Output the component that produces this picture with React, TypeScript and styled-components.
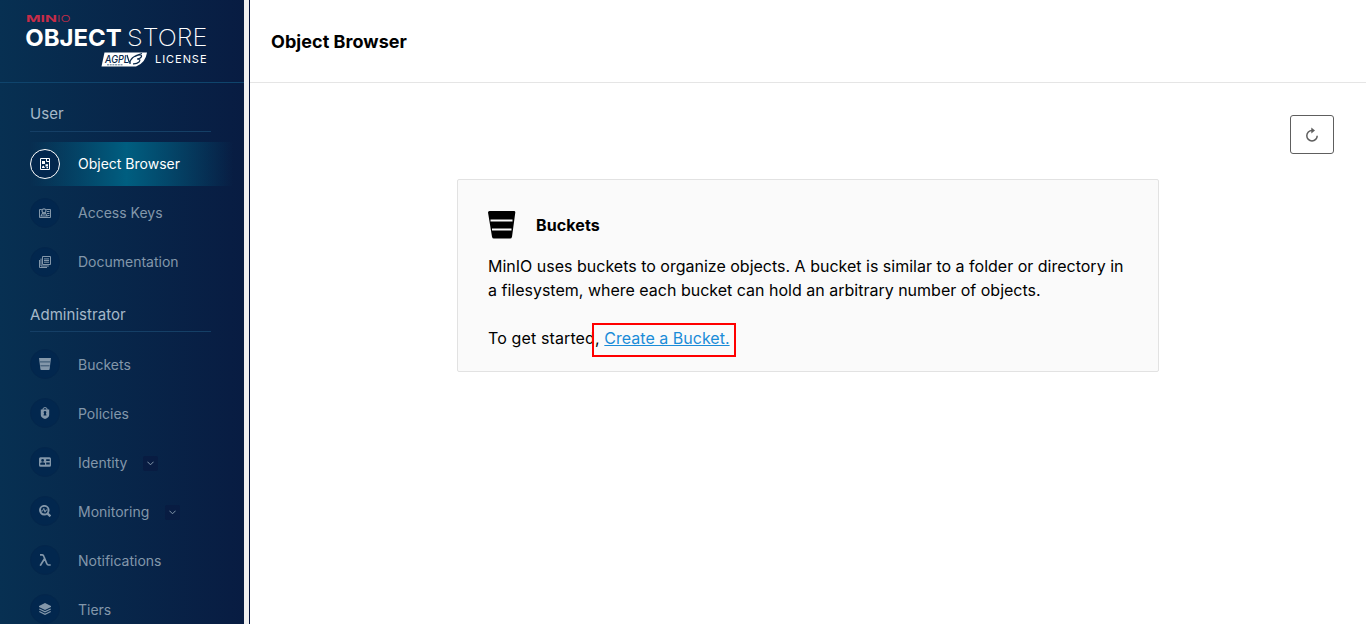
import React from "react";
import styled, { createGlobalStyle, css } from "styled-components";

const GlobalStyle = createGlobalStyle`
  *, *::before, *::after { box-sizing: border-box; }
  html, body { margin: 0; height: 100%; overflow: hidden; }
  body { font-family: Inter, "Liberation Sans", sans-serif; color: #000; background: #fff; }
`;

const Layout = styled.div`
  display: flex;
  height: 100vh;
`;

const Sidebar = styled.aside`
  flex: 0 0 244px;
  overflow: hidden;
  background: linear-gradient(90deg, #073052 0%, #081c42 100%);
`;

const Gutter = styled.div`
  flex: 0 0 6px;
  background: #f0f0f0;
  border-right: 1px solid #06133a;
`;

const LogoBar = styled.div`
  height: 83px;
  border-bottom: 1px solid #0f446c;
  svg { display: block; }
`;

const Section = styled.section<{ $first?: boolean }>`
  padding: ${(p) => (p.$first ? 21 : 15)}px 0 0 30px;
`;

const SectionTitle = styled.h2<{ $drop?: number }>`
  width: 181px;
  height: 28px;
  margin: 0 0 10px;
  padding-top: ${(p) => 1 + (p.$drop ?? 0)}px;
  border-bottom: 1px solid #153f66;
  color: #a5b8c8;
  font-size: 15px;
  font-weight: 400;
  line-height: 18px;
  letter-spacing: 0.05px;
`;

const NavItem = styled.div<{ $active?: boolean }>`
  display: flex;
  align-items: center;
  height: 44px;
  margin-bottom: 5px;
  color: ${(p) => (p.$active ? "#fff" : "#8397aa")};
  ${(p) =>
    p.$active &&
    css`
      background: linear-gradient(90deg, rgba(0, 94, 128, 0) 0%, #005e80 45%, rgba(0, 94, 128, 0) 95%);
    `}
`;

const IconDisc = styled.span<{ $active?: boolean }>`
  display: flex;
  align-items: center;
  justify-content: center;
  width: 30px;
  height: 30px;
  margin-right: 18px;
  border-radius: 50%;
  border: 1px solid ${(p) => (p.$active ? "#fff" : "#04264b")};
  background: #02274e;
  svg { display: block; }
`;

const NavText = styled.div<{ $drop?: number }>`
  display: flex;
  align-items: center;
  padding-top: ${(p) => 2 * (p.$drop ?? 0)}px;
`;

const NavLabel = styled.span`
  font-size: 14px;
  line-height: 20px;
`;

const Expander = styled.span`
  display: flex;
  align-items: center;
  justify-content: center;
  width: 15px;
  height: 15px;
  margin-left: 15.5px;
  border-radius: 2px;
  background: #081c42;
`;

const Main = styled.main`
  flex: 1;
  min-width: 0;
`;

const Header = styled.header`
  display: flex;
  align-items: center;
  height: 83px;
  padding: 2px 0 0 21px;
  border-bottom: 1px solid #e5e5e5;
`;

const Title = styled.h1`
  margin: 0;
  font-size: 18px;
  line-height: 24px;
  font-weight: 700;
  letter-spacing: 0.05px;
`;

const Toolbar = styled.div`
  display: flex;
  justify-content: flex-end;
  padding: 32px 32px 25px 0;
`;

const RefreshButton = styled.button`
  display: flex;
  align-items: center;
  justify-content: center;
  width: 44px;
  height: 39px;
  padding: 0;
  border: 1px solid #5e5e5e;
  border-radius: 3px;
  background: #fff;
`;

const Card = styled.section`
  width: 702px;
  height: 193px;
  margin-left: 207px;
  padding: 30px;
  border: 1px solid #e2e2e2;
  border-radius: 2px;
  background: #fafafa;
`;

const CardHeading = styled.div`
  display: flex;
  align-items: center;
  gap: 20px;
  height: 30px;
  margin-bottom: 14px;
`;

const CardTitle = styled.h2`
  margin: 0;
  font-size: 16px;
  font-weight: 700;
  letter-spacing: 0.1px;
`;

const Paragraph = styled.p<{ $spaced?: boolean }>`
  margin: 0 0 24px;
  font-size: 16px;
  line-height: 24px;
  letter-spacing: ${(p) => (p.$spaced ? "0.12px" : "normal")};
`;

const LinkWrap = styled.span`
  position: relative;
  letter-spacing: 0.02px;
`;

const Highlight = styled.span`
  position: absolute;
  left: -12px;
  top: -5px;
  width: 144px;
  height: 34px;
  border: 2px solid #f00;
`;

const Link = styled.a`
  color: #1a8cd8;
  text-decoration: underline;
`;

const Logo = () => (
  <svg width="244" height="82" viewBox="0 0 244 82">
    <g fontFamily="Inter, sans-serif">
      <text x="26" y="22" fontSize="9.6" fontWeight="700" fill="#c72c48" textLength="31" lengthAdjust="spacingAndGlyphs">MIN</text>
      <text x="57" y="22" fontSize="9.6" fontWeight="300" fill="#c72c48" textLength="13.5" lengthAdjust="spacingAndGlyphs">IO</text>
      <text x="25.3" y="46" fontSize="23.5" fontWeight="700" fill="#fff" textLength="96.5" lengthAdjust="spacingAndGlyphs">OBJECT</text>
      <text x="127" y="46" fontSize="23.5" fontWeight="200" fill="#fff" textLength="80.5" lengthAdjust="spacingAndGlyphs">STORE</text>
      <text x="155" y="63" fontSize="11" fill="#fff" textLength="51.5" lengthAdjust="spacing">LICENSE</text>
    </g>
    <path d="M104.5 52.5H147Q145.5 63 136 66.5H101.5Z" fill="#fff" />
    <text x="105" y="62.5" fontFamily="Inter, sans-serif" fontSize="10.5" fontWeight="500" fontStyle="italic" fill="#082749" textLength="24" lengthAdjust="spacingAndGlyphs">AGPL</text>
    <path d="M107 64.8H123" stroke="#53708a" strokeWidth="1" strokeDasharray="2 .7" />
    <path d="M127 55L129.3 62.5M130 64Q129 57 142 53.5M135 56.5Q142 53.5 141.5 56.5Q140.5 58.8 137 59Q141.5 59 139 62Q137 64 133 63.8" fill="none" stroke="#082749" strokeWidth="1.2" />
  </svg>
);

const iconShapes: Record<string, React.ReactNode> = {
  browser: (
    <>
      <path d="M1.5 .5H10.5V11.5H1.5Z" fill="none" stroke="currentColor" strokeWidth="1" />
      <path d="M7.5 .5V3.5H10.5" fill="none" stroke="currentColor" />
      <path d="M3 3H6V6H3ZM6.5 6.2H9V8.5H6.5ZM3 8.7L4.5 7.5L6 10H3ZM7.5 9H9V10.3H7.5Z" fill="currentColor" />
    </>
  ),
  keys: (
    <>
      <path d="M2.8 2.5H.5V10.5H11.5V2.5H7.2" fill="none" stroke="currentColor" />
      <circle cx="5" cy="3.8" r="2" fill="none" stroke="currentColor" strokeWidth="1.2" />
      <path d="M2 9L3.6 6L5 7.2L6.4 6L8 9ZM8 4.5H10.5M8 6.5H10.5M8.5 8.5H10.5" fill="none" stroke="currentColor" strokeWidth="1.1" />
    </>
  ),
  docs: (
    <path d="M3.5 .5H11.5V8.5H3.5ZM5 2.9H10M5 4.5H10M5 6.2H10M2 2.5V10H9.8M.5 4V11.5H8" fill="none" stroke="currentColor" strokeWidth="1" />
  ),
  bucket: (
    <>
      <path d="M0 0H12L10.6 11.3Q10.5 12 9.7 12H2.3Q1.5 12 1.4 11.3Z" fill="currentColor" />
      <path d="M1 3.9H11M1.4 7.8H10.6" stroke="#2b4968" strokeWidth=".9" />
    </>
  ),
  policy: (
    <>
      <path d="M4 3V2Q4 .6 6 .6Q8 .6 8 2V3" fill="none" stroke="currentColor" strokeWidth="1" />
      <path fillRule="evenodd" d="M1.8 2.5H10.2V8Q10.2 10.5 6 12Q1.8 10.5 1.8 8ZM6 4A1.3 1.3 0 0 0 5.1 6.3L4.5 8.5H7.5L6.9 6.3A1.3 1.3 0 0 0 6 4Z" fill="currentColor" />
    </>
  ),
  identity: (
    <path fillRule="evenodd" d="M1.5 1.3H10.5Q12 1.3 12 2.8V9.2Q12 10.7 10.5 10.7H1.5Q0 10.7 0 9.2V2.8Q0 1.3 1.5 1.3ZM3.6 3A1.4 1.4 0 1 0 3.6 5.8A1.4 1.4 0 1 0 3.6 3ZM1.3 8.8H6V7Q3.6 5.7 1.3 7ZM7.2 3.3V5H10.7V3.3ZM7.2 6.5V8.5H10.7V6.5Z" fill="currentColor" />
  ),
  monitor: (
    <>
      <circle cx="5.3" cy="5.2" r="4.3" fill="none" stroke="currentColor" strokeWidth="1.9" />
      <path d="M8.3 8.3L11.4 11.3" stroke="currentColor" strokeWidth="2.3" />
      <path d="M2 6H3.6L4.8 3.4L6 7.2L7 5H8.5" fill="none" stroke="currentColor" strokeWidth="1" />
    </>
  ),
  lambda: (
    <path d="M1 .9H3.2Q4.3 .9 4.8 2.3L7.7 9.5Q8.3 11 9.5 11H11.7M5.5 4.7L1.2 11.7" fill="none" stroke="currentColor" strokeWidth="1.7" />
  ),
  tiers: (
    <>
      <path d="M6 0L12 3V4L6 7L0 4V3Z" fill="currentColor" />
      <path d="M.3 6L6 8.8L11.7 6M.3 8.5L6 11.3L11.7 8.5" fill="none" stroke="currentColor" strokeWidth="1.3" />
    </>
  ),
};

const NavIcon = ({ name }: { name: string }) => (
  <svg width="12" height="12" viewBox="0 0 12 12">{iconShapes[name]}</svg>
);

type Item = { icon: string; label: string; active?: boolean; expandable?: boolean };

const userItems: Item[] = [
  { icon: "browser", label: "Object Browser", active: true },
  { icon: "keys", label: "Access Keys" },
  { icon: "docs", label: "Documentation" },
];

const adminItems: Item[] = [
  { icon: "bucket", label: "Buckets" },
  { icon: "policy", label: "Policies" },
  { icon: "identity", label: "Identity", expandable: true },
  { icon: "monitor", label: "Monitoring", expandable: true },
  { icon: "lambda", label: "Notifications" },
  { icon: "tiers", label: "Tiers" },
];

const NavList = ({ items, drop = 0 }: { items: Item[]; drop?: number }) => (
  <>
    {items.map((item) => (
      <NavItem key={item.label} $active={item.active}>
        <IconDisc $active={item.active}>
          <NavIcon name={item.icon} />
        </IconDisc>
        <NavText $drop={drop}>
          <NavLabel>{item.label}</NavLabel>
          {item.expandable && (
            <Expander>
              <svg width="7" height="5" viewBox="0 0 7 5">
                <path d="M.4 .7L3.5 3.8L6.6 .7" fill="none" stroke="currentColor" />
              </svg>
            </Expander>
          )}
        </NavText>
      </NavItem>
    ))}
  </>
);

export default function App() {
  return (
    <Layout>
      <GlobalStyle />
      <Sidebar>
        <LogoBar>
          <Logo />
        </LogoBar>
        <Section $first>
          <SectionTitle>User</SectionTitle>
          <NavList items={userItems} />
        </Section>
        <Section>
          <SectionTitle $drop={1}>Administrator</SectionTitle>
          <NavList items={adminItems} drop={1} />
        </Section>
      </Sidebar>
      <Gutter />
      <Main>
        <Header>
          <Title>Object Browser</Title>
        </Header>
        <Toolbar>
          <RefreshButton aria-label="Refresh">
            <svg width="14" height="16" viewBox="0 0 14 16">
              <path d="M7 3.5A5.2 5.2 0 1 0 12.2 8.7" fill="none" stroke="#5e5e5e" strokeWidth="1.5" />
              <path d="M6.3 .5L10 3.5L6.3 6.5Z" fill="#5e5e5e" />
            </svg>
          </RefreshButton>
        </Toolbar>
        <Card>
          <CardHeading>
            <svg width="28" height="28" viewBox="0 0 28 28">
              <path d="M1.5 0H26Q27.5 0 27.3 1.5L24 25.7Q23.7 27.6 22 27.6H6Q4.3 27.6 4 25.7L0 1.5Q0 0 1.5 0Z" fill="#000" />
              <path d="M2.5 9.5H24.5M4 18.5H23.5" stroke="#fafafa" strokeWidth="1.8" />
            </svg>
            <CardTitle>Buckets</CardTitle>
          </CardHeading>
          <Paragraph>
            MinIO uses buckets to organize objects. A bucket is similar to a folder or directory in a filesystem, where
            each bucket can hold an arbitrary number of objects.
          </Paragraph>
          <Paragraph $spaced>
            To get started,{" "}
            <LinkWrap>
              <Link>Create a Bucket.</Link>
              <Highlight />
            </LinkWrap>
          </Paragraph>
        </Card>
      </Main>
    </Layout>
  );
}
